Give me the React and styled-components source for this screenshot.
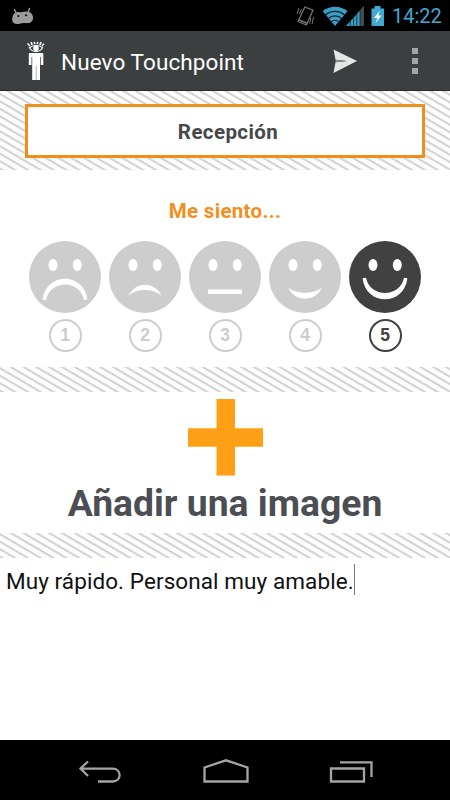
import React from "react";
import styled, { createGlobalStyle } from "styled-components";

const Global = createGlobalStyle`
  * { box-sizing: border-box; }
  body { margin: 0; background: #fff; font-family: Roboto, "Liberation Sans", sans-serif; }
  svg { display: block; flex: none; }
`;

const Screen = styled.div`
  width: 450px;
  height: 800px;
  display: flex;
  flex-direction: column;
  background: #fff;
  overflow: hidden;
`;

const StatusBar = styled.header`
  height: 31px;
  flex: none;
  background: #000;
  display: flex;
  align-items: center;
  justify-content: space-between;
  padding: 0 8px 0 10px;
`;

const StatusIcons = styled.div`
  display: flex;
  align-items: center;
`;

const Clock = styled.time`
  width: 50px;
  margin-left: 8px;
  padding-top: 1px;
  color: #42a9d1;
  font-size: 20px;
  line-height: 31px;
  white-space: nowrap;
`;

const ActionBar = styled.div`
  height: 60px;
  flex: none;
  display: flex;
  align-items: center;
  background: #3c3f40;
  border-bottom: 1px solid #2a2829;
  padding: 0 32px 0 24px;
`;

const Title = styled.h1`
  margin: 0 auto 0 12px;
  font-size: 22.5px;
  font-weight: 400;
  line-height: 30px;
  letter-spacing: 0.1px;
  padding-top: 2px;
  color: #fff;
  white-space: nowrap;
`;

const Overflow = styled.div`
  display: grid;
  gap: 4px;
  margin-left: 55px;
  padding-top: 1px;
`;

const Dot = styled.i`
  width: 6px;
  height: 6px;
  background: #a4a6a6;
`;

const Stripes = styled.div`
  height: ${(p) => p.$height}px;
  flex: none;
  padding: ${(p) => p.$pad || "0"};
  background: repeating-linear-gradient(
    30.3deg,
    #e9e9e9 0,
    #d3d3d3 0.8px,
    #d3d3d3 1.7px,
    #fdfdfd 2.7px,
    #fdfdfd 6.2px,
    #e9e9e9 6.46px
  );
`;

const Place = styled.div`
  height: 54px;
  border: 3px solid #ef8e1b;
  background: #fff;
  color: #45484b;
  display: flex;
  align-items: center;
  justify-content: center;
  padding: 2px 0 0 6px;
  font-size: 20.5px;
  letter-spacing: 0.4px;
  font-weight: 700;
`;

const Mood = styled.section`
  height: 197px;
  flex: none;
  padding-top: 29px;
`;

const MoodTitle = styled.h2`
  margin: 0 0 18px;
  text-align: center;
  font-size: 20.5px;
  line-height: 24px;
  letter-spacing: 0.3px;
  font-weight: 700;
  color: #f18f20;
`;

const Faces = styled.div`
  display: flex;
  justify-content: center;
  gap: 8px;
`;

const Option = styled.div`
  width: 72px;
  display: flex;
  flex-direction: column;
  align-items: center;
  gap: 6px;
  color: ${(p) => (p.$active ? "#414142" : "#cdcdcd")};
`;

const Score = styled.span`
  width: 33px;
  height: 33px;
  border: 2px solid currentColor;
  border-radius: 50%;
  display: flex;
  align-items: center;
  justify-content: center;
  font: 700 17.5px/29px "Liberation Sans", Arial, sans-serif;
`;

const AddImage = styled.section`
  height: 141px;
  flex: none;
  display: flex;
  flex-direction: column;
  align-items: center;
  padding-top: 7px;
`;

const AddLabel = styled.div`
  margin-top: 2px;
  font-size: 37.3px;
  line-height: 50px;
  font-weight: 700;
  color: #4b4f53;
  white-space: nowrap;
`;

const Comment = styled.section`
  flex: 1;
  display: flex;
  align-items: flex-start;
  padding: 6px 6px;
  color: #111;
  font-size: 22.5px;
  line-height: 34px;
  letter-spacing: 0.08px;
  white-space: nowrap;
`;

const Caret = styled.i`
  width: 1px;
  height: 31px;
  background: #777;
`;

const NavBar = styled.nav`
  height: 60px;
  flex: none;
  background: #000;
  display: flex;
  align-items: center;
  justify-content: space-between;
  padding: 2px 75px 0 77px;
`;

const mouths = [
  <path key="m" d="M13.6 58.5C17 30.8 55 30.8 58.4 58.5L55 59C51 38.3 21 38.3 17 59Z" fill="#fff" />,
  <path key="m" d="M19.3 54.7C27 40 45 40 52.9 54.7C44 47.1 28 47.1 19.3 54.7Z" fill="#fff" />,
  <path key="m" d="M19 50.8H53" stroke="#fff" strokeWidth="4.6" />,
  <path key="m" d="M19.3 46.8C28 53.4 44 53.4 52.9 46.8C46 61.4 26 61.4 19.3 46.8Z" fill="#fff" />,
  <path key="m" d="M13.6 37.2C17 65.4 55 65.4 58.4 37.2L55 36.7C51 57 21 57 17 36.7Z" fill="#fff" />,
];

function Face({ level }) {
  return (
    <svg width="72" height="72" viewBox="0 0 72 72">
      <circle cx="36" cy="36" r="36" fill="currentColor" />
      <ellipse cx="24" cy="24" rx="4.5" ry="6" fill="#fff" />
      <ellipse cx="48.3" cy="24" rx="4.5" ry="6" fill="#fff" />
      {mouths[level - 1]}
    </svg>
  );
}

function AndroidHead() {
  return (
    <svg width="26" height="20" viewBox="0 0 26 20">
      <path d="M4.5 3.5L6.5 8M19.5 2.5L17.8 7" stroke="#9b9b9b" strokeWidth="1.4" strokeLinecap="round" />
      <path d="M2.5 11C3.5 6.8 7 5.6 10 6.2C12 6.6 13 5.8 15 5.6C20 5 23.5 8 23 12.5C22.5 17 18.5 17.5 15 17C11.5 16.6 9.5 18.3 6.5 18C3 17.7 1.5 15 2.5 11Z" fill="#9b9b9b" />
      <circle cx="8.3" cy="10" r="1" fill="#000" />
      <circle cx="16" cy="9.3" r="1" fill="#000" />
    </svg>
  );
}

function DeviceIcons() {
  return (
    <svg width="88" height="24" viewBox="296 3 88 24">
      <g fill="none" stroke="#737373" strokeWidth="1.3">
        <path d="M304.8 6L313 9.2L306.3 24L298 20.5Z" strokeLinejoin="round" />
        <path d="M299.3 18.9L307 22.2" strokeWidth="1.6" />
        <path d="M299 7L297 13M301.6 8L299.4 13M310.8 17L309.6 22.5M313.6 16L312 23" strokeWidth="1" />
      </g>
      <path d="M335 25L322.7 10.2C329 4.2 341 4.2 347.5 10.2Z" fill="#3b9cc4" />
      <g fill="none" stroke="#061c26" strokeWidth="1.1">
        <path d="M325.6 14C330.5 9.2 339.5 9.2 344.4 14" />
        <path d="M328.6 17.5C332 14 338 14 341.4 17.5" />
        <path d="M331.4 20.7C333.3 18.8 336.7 18.8 338.6 20.7" />
      </g>
      <path d="M346 25L364 5V25Z" fill="#3b9cc4" />
      <path d="M360 9.5L364 5V25H360Z" fill="#48494b" />
      <path d="M350.3 19V25M353.6 16V25M356.8 12V25M360 9V25" stroke="#082833" strokeWidth=".8" />
      <path d="M374.5 5H380.5V7.5H384V25H371.5V7.5H374.5Z" fill="#42a9d1" />
      <path d="M379.8 9.5L374.2 17H377.4L375.4 22.3L381.5 14.5H378.2Z" fill="#fff" />
    </svg>
  );
}

function Person() {
  return (
    <svg width="25" height="42" viewBox="24 40 25 42">
      <g fill="none" stroke="#fff">
        <path d="M29.3 47.8C33 44.8 39.5 44.8 42.7 47.8C39.5 52.8 32.8 52.8 29.3 47.8Z" strokeWidth="1.1" />
        <path d="M30 46L27.5 43.5M32.2 44.8L31 42.2M34.7 44.2L34.3 41.8M37.3 44.2L37.8 41.8M39.8 44.8L41.2 42.2M42 46L44 43.8" strokeWidth="1.6" />
      </g>
      <circle cx="36" cy="48.2" r="2.8" fill="#fff" />
      <path d="M29.8 53H42.3Q43.3 53 43.3 54V65H40.7V57H40V80H36.3V66H35.9V80H32.2V57H31.5V65H28.8V54Q28.8 53 29.8 53Z" fill="#fff" />
    </svg>
  );
}

export default function App() {
  return (
    <>
      <Global />
      <Screen>
        <StatusBar>
          <AndroidHead />
          <StatusIcons>
            <DeviceIcons />
            <Clock>14:22</Clock>
          </StatusIcons>
        </StatusBar>
        <ActionBar>
          <Person />
          <Title>Nuevo Touchpoint</Title>
          <svg width="24" height="24" viewBox="0 0 24 24">
            <path d="M0.5 0.5L24 12L0.5 24L2.5 13.2L14 12L2.5 10.8Z" fill="#e4e5e5" />
            <path d="M2.5 10.8L14 12L2.5 13.2Z" fill="#8a8b8b" />
          </svg>
          <Overflow>
            <Dot />
            <Dot />
            <Dot />
          </Overflow>
        </ActionBar>
        <Stripes $height={79} $pad="13px 25px">
          <Place>Recepción</Place>
        </Stripes>
        <Mood>
          <MoodTitle>Me siento...</MoodTitle>
          <Faces>
            {[1, 2, 3, 4, 5].map((n) => (
              <Option key={n} $active={n === 5}>
                <Face level={n} />
                <Score>{n}</Score>
              </Option>
            ))}
          </Faces>
        </Mood>
        <Stripes $height={25} />
        <AddImage>
          <svg width="75" height="77" viewBox="0 0 75 77">
            <path d="M28.5 0H47V29.3H75V47.7H47V76.5H28.5V47.7H0V29.3H28.5Z" fill="#ff9f15" />
          </svg>
          <AddLabel>Añadir una imagen</AddLabel>
        </AddImage>
        <Stripes $height={25} />
        <Comment>
          Muy rápido. Personal muy amable.
          <Caret />
        </Comment>
        <NavBar>
          <svg width="46" height="28" viewBox="77 757 46 28" fill="none" stroke="#a5a5a5" strokeWidth="2.3">
            <path d="M88 761.5L80.5 768.5L88 776M81 768.7H112.5C122 768.7 122 781.5 112.5 781.5H98" />
          </svg>
          <svg width="48" height="28" viewBox="201 757 48 28" fill="none" stroke="#a5a5a5" strokeWidth="2.3">
            <path d="M203.5 781.5V767.5L225 760.3L246.5 767.5V781.5Z" />
          </svg>
          <svg width="46" height="28" viewBox="329 757 46 28" fill="none" stroke="#a5a5a5" strokeWidth="2.3">
            <path d="M331 768.5H364V781.5H331ZM340 762.3H371.5V777" />
          </svg>
        </NavBar>
      </Screen>
    </>
  );
}
